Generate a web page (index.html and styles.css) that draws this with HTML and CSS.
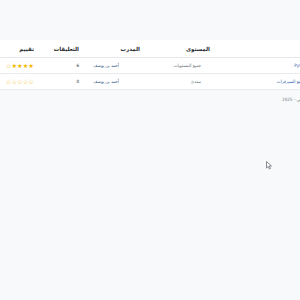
FILE: index.html
```html
<!DOCTYPE html>
<html lang="ar">
<head>
<meta charset="utf-8">
<link rel="stylesheet" href="styles.css">
</head>
<body>
<div class="page">
  <div class="content" dir="rtl">
    <table class="courses">
      <colgroup>
        <col class="c-course">
        <col class="c-level">
        <col class="c-trainer">
        <col class="c-comments">
        <col class="c-rating">
      </colgroup>
      <thead>
        <tr>
          <th>الدورة</th>
          <th>المستوى</th>
          <th>المدرب</th>
          <th>التعليقات</th>
          <th>تقييم</th>
        </tr>
      </thead>
      <tbody>
        <tr>
          <td><a class="course-link">أساسيات البرمجة بلغة Python</a></td>
          <td><span class="level">جميع المستويات</span></td>
          <td><a class="trainer">أحمد بن يوسف</a></td>
          <td class="num">6</td>
          <td><span class="stars"><span class="on">★</span><span class="on">★</span><span class="on">★</span><span class="on">★</span><span class="off">☆</span></span></td>
        </tr>
        <tr>
          <td><a class="course-link">بناء وتطوير تطبيقات الويب مع السيرفرات</a></td>
          <td><span class="level">مبتدئ</span></td>
          <td><a class="trainer">أحمد بن يوسف</a></td>
          <td class="num">0</td>
          <td><span class="stars"><span class="off">☆</span><span class="off">☆</span><span class="off">☆</span><span class="off">☆</span><span class="off">☆</span></span></td>
        </tr>
      </tbody>
    </table>
    <footer class="foot">أكاديمية التعليم الرقمي - 2025</footer>
  </div>
</div>
<svg class="cursor" width="8" height="9" viewBox="0 0 8 9"><path d="M0.5 0.5 L0.5 7 L2.2 5.4 L3.4 8 L4.4 7.5 L3.3 5 L5.5 5 Z" fill="#fff" stroke="#6b6f78" stroke-width="0.8"/></svg>
</body>
</html>
```
FILE: styles.css
```css
html, body {
  margin: 0;
  padding: 0;
}
body {
  background: #f8f9fa;
  font-family: "DejaVu Sans", sans-serif;
  width: 300px;
  height: 300px;
  overflow: hidden;
  position: relative;
}
.page {
  width: 300px;
  overflow: hidden;
  padding-top: 40px;
}
.content {
  width: 352px;
}
.courses {
  width: 352px;
  table-layout: fixed;
  border-collapse: collapse;
  background: #fff;
}
.c-course { width: 137px; }
.c-level { width: 70px; }
.c-trainer { width: 61px; }
.c-comments { width: 42px; }
.c-rating { width: 42px; }
.courses th {
  text-align: right;
  font-size: 5.5px;
  font-weight: bold;
  color: #212529;
  height: 17px;
  padding: 0 5px;
  border-bottom: 1px solid #e3e6ea;
  vertical-align: middle;
}
.courses th:last-child {
  padding-right: 8px;
}
.courses td {
  font-family: "DejaVu Sans Condensed", "DejaVu Sans", sans-serif;
  font-size: 4.5px;
  height: 15px;
  padding: 0 5px;
  border-bottom: 1px solid #e9ecef;
  vertical-align: middle;
  white-space: nowrap;
}
.courses td:last-child {
  padding-right: 8px;
}
.course-link {
  color: #2f5fb3;
}
.level {
  padding-right: 9px;
  color: #6c757d;
}
.trainer {
  color: #3c5a8c;
  padding-right: 21px;
}
.num {
  color: #212529;
}
.stars {
  font-family: "DejaVu Sans", sans-serif;
  font-size: 6.3px;
}
.stars .on { color: #f5b800; }
.stars .off { color: #f0b400; }
.foot {
  padding: 7px 17px 0 0;
  font-family: "DejaVu Sans Condensed", "DejaVu Sans", sans-serif;
  font-size: 4.5px;
  color: #6c757d;
  text-align: right;
}
.cursor {
  position: absolute;
  left: 266px;
  top: 161px;
}
```
